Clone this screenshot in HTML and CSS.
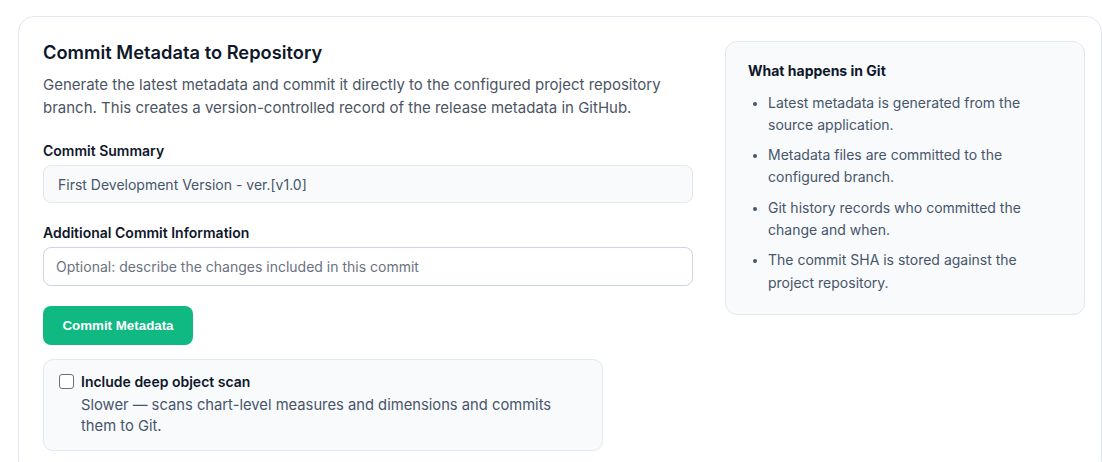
FILE: index.html
```html
<!DOCTYPE html>
<html lang="en">
<head>
<meta charset="utf-8">
<title>Commit Metadata</title>
<link rel="stylesheet" href="styles.css">
</head>
<body>
<div class="card">
  <div class="main">
    <h2 class="title">Commit Metadata to Repository</h2>
    <p class="desc">Generate the latest metadata and commit it directly to the configured project repository branch. This creates a version-controlled record of the release metadata in GitHub.</p>
    <label class="label">Commit Summary</label>
    <div class="input filled">First Development Version - ver.[v1.0]</div>
    <label class="label">Additional Commit Information</label>
    <div class="input empty">Optional: describe the changes included in this commit</div>
    <button class="btn">Commit Metadata</button>
    <div class="scan">
      <div class="scan-row">
        <span class="box"></span>
        <span class="scan-title">Include deep object scan</span>
      </div>
      <p class="scan-desc">Slower — scans chart-level measures and dimensions and commits them to Git.</p>
    </div>
  </div>
  <aside class="info">
    <h3 class="info-title">What happens in Git</h3>
    <ul class="info-list">
      <li>Latest metadata is generated from the source application.</li>
      <li>Metadata files are committed to the configured branch.</li>
      <li>Git history records who committed the change and when.</li>
      <li>The commit SHA is stored against the project repository.</li>
    </ul>
  </aside>
</div>
</body>
</html>
```
FILE: styles.css
```css
* { box-sizing: border-box; }
html, body { margin: 0; padding: 0; background: #ffffff; }
body {
  font-family: Inter, "Noto Sans", sans-serif;
  color: #0f172a;
  padding: 16px 0 0 18px;
  overflow: hidden;
}
.card {
  width: 1084px;
  border: 1px solid #e2e8f0;
  border-radius: 16px;
  padding: 23px 15px 24px 24px;
  display: grid;
  grid-template-columns: 650px 360px;
  column-gap: 32px;
  align-items: start;
}
.main { display: flex; flex-direction: column; }
.title {
  margin: 0;
  font-size: 18.3px;
  font-weight: 600;
  line-height: 24px;
  color: #0f172a;
}
.desc {
  margin: 9px 0 0;
  font-size: 15px;
  line-height: 23px;
  color: #4b5563;
}
.label {
  display: block;
  margin-top: 20px;
  font-size: 14px;
  font-weight: 600;
  line-height: 20px;
  color: #0f172a;
}
.desc + .label { margin-top: 22px; }
.input {
  margin-top: 4px;
  height: 38px;
  border-radius: 8px;
  display: flex;
  align-items: center;
  font-size: 14px;
}
.input.filled {
  background: #f8fafc;
  border: 1px solid #e2e8f0;
  padding-left: 14px;
  color: #475569;
}
.input.empty {
  margin-top: 3.5px;
  background: #fff;
  border: 1px solid #cbd5e1;
  padding-left: 12px;
  color: #6b7280;
  height: 39px;
}
.btn {
  margin-top: 20px;
  align-self: flex-start;
  width: 150px;
  height: 39px;
  border: none;
  border-radius: 8px;
  background: #10b981;
  color: #fff;
  font-family: "Liberation Sans", Arial, sans-serif;
  font-weight: 700;
  font-size: 13.33px;
}
.scan {
  margin-top: 14px;
  width: 560px;
  background: #f8fafc;
  border: 1px solid #e2e8f0;
  border-radius: 10px;
  padding: 12px 14px 13px 14px;
}
.scan-row { display: flex; align-items: center; gap: 7px; }
.box {
  width: 15px;
  height: 15px;
  border: 1px solid #6b7280;
  border-radius: 3px;
  background: #fff;
  margin-left: 1px;
}
.scan-title {
  font-size: 14px;
  font-weight: 600;
  line-height: 20px;
  color: #0f172a;
}
.scan-desc {
  margin: 3px 0 0 23px;
  font-size: 14.75px;
  line-height: 21px;
  color: #475569;
}
.info {
  margin-top: 1px;
  background: #f8fafc;
  border: 1px solid #e2e8f0;
  border-radius: 12px;
  padding: 19px 22px 20px 22px;
}
.info-title {
  margin: 0;
  font-size: 14px;
  font-weight: 700;
  line-height: 20px;
  color: #0f172a;
}
.info-list {
  margin: 10.5px 0 0;
  padding-left: 20px;
  color: #475569;
  font-size: 14px;
  line-height: 22.3px;
}
.info-list li { margin-bottom: 8px; padding-right: 40px; }
.info-list li:last-child { margin-bottom: 0; }
.info-list li::marker { color: #475569; font-size: 12px; }
```
